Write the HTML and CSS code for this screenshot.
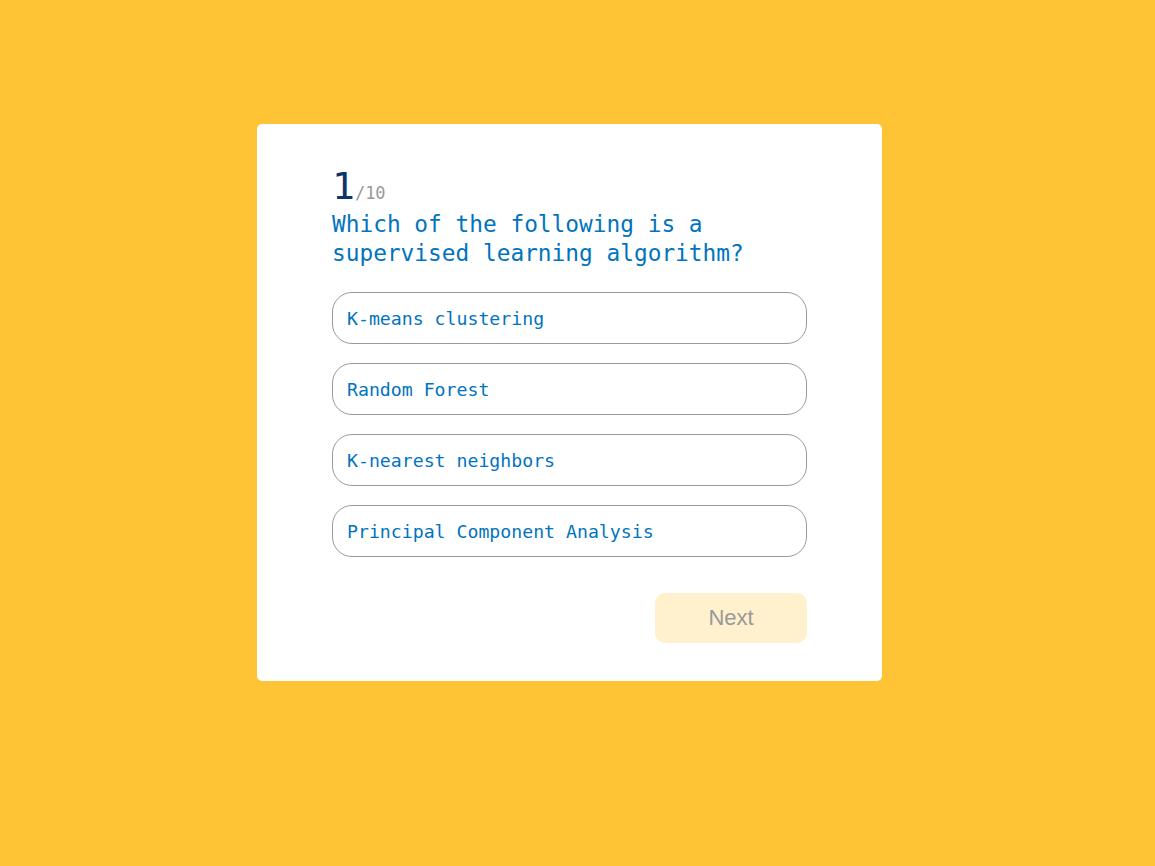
FILE: index.html
```html
<!DOCTYPE html>
<html lang="en">
<head>
<meta charset="utf-8">
<title>Quiz</title>
<link rel="stylesheet" href="styles.css">
</head>
<body>
<main class="page">
  <section class="card">
    <div class="counter"><span class="current">1</span><span class="total">/10</span></div>
    <h1 class="question">Which of the following is a supervised learning algorithm?</h1>
    <div class="options">
      <button class="option">K-means clustering</button>
      <button class="option">Random Forest</button>
      <button class="option">K-nearest neighbors</button>
      <button class="option">Principal Component Analysis</button>
    </div>
    <div class="actions">
      <button class="next" disabled>Next</button>
    </div>
  </section>
</main>
</body>
</html>
```

FILE: styles.css
```css
* { box-sizing: border-box; }
html, body { margin: 0; padding: 0; }
body {
  background: #FFC436;
  font-family: "DejaVu Sans Mono", "Liberation Mono", monospace;
  min-height: 866px;
}
.page {
  display: flex;
  justify-content: center;
  padding-top: 124px;
  padding-right: 16px;
}
.card {
  width: 625px;
  height: 557px;
  background: #fff;
  border-radius: 5px;
  padding: 42px 75px 38px;
  display: flex;
  flex-direction: column;
}
.counter {
  line-height: 40px;
  height: 44px;
}
.current {
  font-size: 38px;
  color: #0C356A;
}
.total {
  font-size: 17px;
  color: #999;
}
.question {
  margin: 0;
  font-weight: normal;
  font-size: 22.8px;
  line-height: 29px;
  color: #0174BE;
}
.options {
  margin-top: 24px;
  display: flex;
  flex-direction: column;
  gap: 19px;
}
.option {
  height: 52px;
  border: 1px solid #9a9a9a;
  border-radius: 20px;
  background: #fff;
  text-align: left;
  padding: 0 14px;
  font-family: "DejaVu Sans Mono", "Liberation Mono", monospace;
  font-size: 18.2px;
  color: #0174BE;
}
.actions {
  margin-top: auto;
  display: flex;
  justify-content: flex-end;
}
.next {
  width: 152px;
  height: 50px;
  border: none;
  border-radius: 10px;
  background: #FFF0CE;
  color: #999;
  font-family: "Liberation Sans", Arial, sans-serif;
  font-size: 22px;
}
```
